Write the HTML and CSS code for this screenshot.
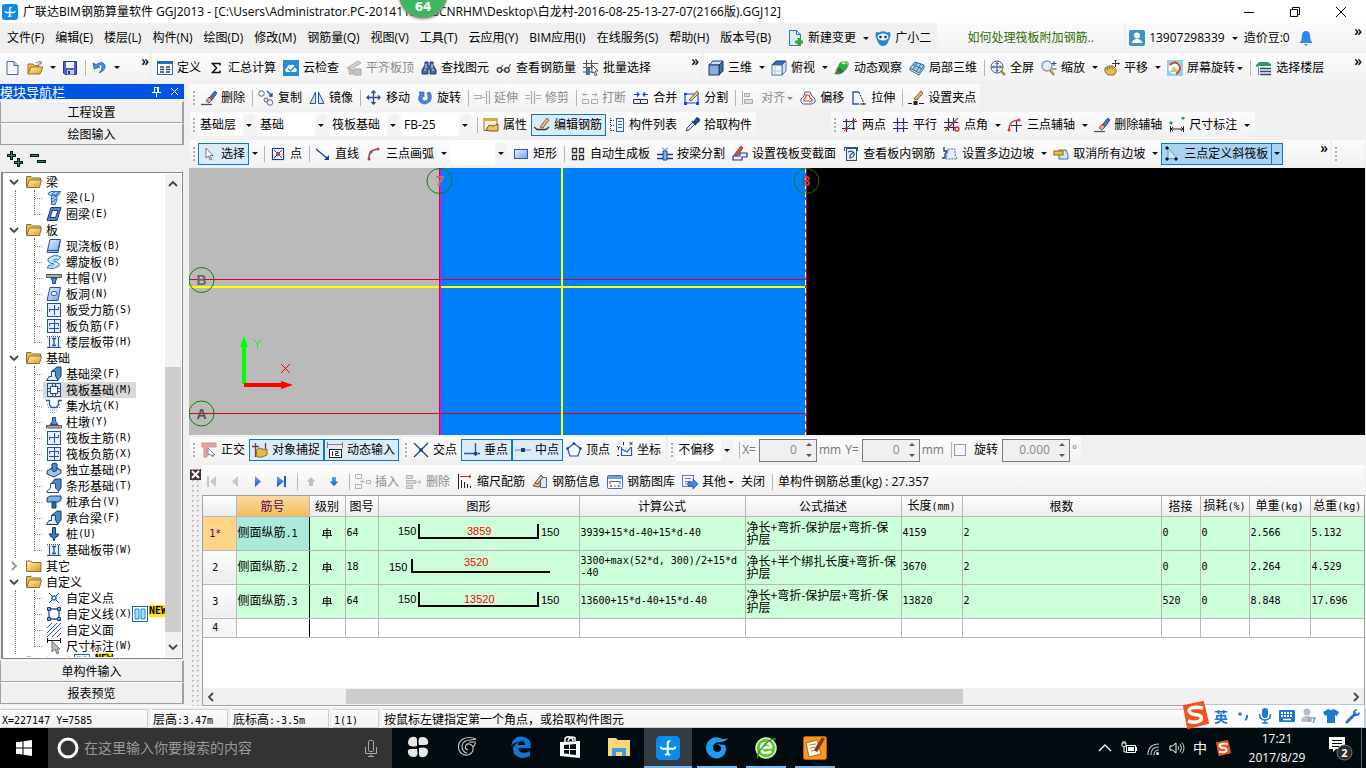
FILE: index.html
```html
<!DOCTYPE html>
<html lang="zh-CN">
<head>
<meta charset="utf-8">
<title>广联达BIM钢筋算量软件 GGJ2013</title>
<link rel="stylesheet" href="styles.css">
</head>
<body>
<svg class="sprite" aria-hidden="true">
<defs>
<linearGradient id="gb" x1="0" y1="0" x2="1" y2="1"><stop offset="0" stop-color="#eaf3ff"/><stop offset="1" stop-color="#6ea4ea"/></linearGradient>
<linearGradient id="gf" x1="0" y1="0" x2="1" y2="1"><stop offset="0" stop-color="#fff3b8"/><stop offset="1" stop-color="#d99c20"/></linearGradient>
<linearGradient id="gn" x1="0" y1="0" x2="0" y2="1"><stop offset="0" stop-color="#6fa8ff"/><stop offset="1" stop-color="#1550c8"/></linearGradient>
</defs>
<symbol id="app" viewBox="0 0 16 16"><rect width="16" height="16" rx="3" fill="#0b8bea"/><path d="M9.500 3.500Q7.800 3.200 7.800 5V11Q7.800 12.500 9.500 12.300M3.200 7Q3 8.700 5 8.500H11Q13 8.700 12.800 7M7.800 11Q7.500 12.800 6 12.300" fill="none" stroke="#fff" stroke-width="1.300"/></symbol>
<symbol id="new" viewBox="0 0 16 16"><path d="M3 1.500H10L14 5.500V14.500H3Z" fill="#f6faff" stroke="#4a6690"/><path d="M10 1.500V5.500H14" fill="#c4d8f0" stroke="#4a6690"/></symbol>
<symbol id="open" viewBox="0 0 16 16"><path d="M1 14V4H6L7.500 5.500H12V7" fill="#e8b84a" stroke="#9a7420"/><path d="M1 14L4 7H16L13 14Z" fill="url(#gf)" stroke="#9a7420"/><path d="M9 3Q12 0 14 3M14 1V4H11" fill="none" stroke="#5a7898"/></symbol>
<symbol id="save" viewBox="0 0 16 16"><path d="M1.500 1.500H14.500V14.500H3L1.500 13Z" fill="#4a62c8" stroke="#27348b"/><rect x="4" y="2" width="8" height="6" fill="#f5f7ff"/><rect x="5" y="10" width="7" height="4.500" fill="#c6cbe6"/><rect x="6" y="11" width="2" height="3" fill="#27348b"/></symbol>
<symbol id="undo" viewBox="0 0 16 16"><path d="M2 3L3 9L9 7L6.500 6Q11 3 11 7Q11 10 8 13Q15 10 14 5.500Q12 0 5 4.500Z" fill="#4d8ae8" stroke="#1f4fb0" stroke-width=".7"/></symbol>
<symbol id="form" viewBox="0 0 16 16"><rect x=".5" y="1.500" width="15" height="13" fill="#fff" stroke="#2b6cb8"/><rect y="1" width="16" height="3" fill="#2b6cb8"/><path d="M3 7H7M3 9.500H7M3 12H7M9 7H13M9 9.500H13M9 12H13" stroke="#3a3f60" stroke-width="1.300"/></symbol>
<symbol id="sigma" viewBox="0 0 16 16"><path d="M12 5.500V3.500H4.500L8.500 8L4.500 12.500H12V10.500" fill="none" stroke="#111" stroke-width="1.500"/></symbol>
<symbol id="cloud" viewBox="0 0 16 16"><rect width="16" height="16" fill="#1f8fd6"/><path d="M3 12Q1 9 4 8Q5 4 8 5Q12 4 12 8Q15 9 13 12Z" fill="#fff"/><path d="M5 8.500L7.500 11L12.500 5.500" fill="none" stroke="#1f8fd6" stroke-width="1.500"/></symbol>
<symbol id="flat" viewBox="0 0 16 16"><path d="M1 8L12 1L15 3L5 9Z" fill="#d4d4d4" stroke="#a8a8a8"/><path d="M2 10H7V14H3M8 9H15V15H8Z" fill="#c4c4c4" stroke="#a8a8a8"/></symbol>
<symbol id="bino" viewBox="0 0 16 16"><path d="M4 2H7V6H9V2H12V5L15 10V14H9V9H7V14H1V10L4 5Z" fill="#4b6a9d" stroke="#253a66"/><path d="M3 10H5M11 10H13M5 4V8M11 4V8" stroke="#d8e4f6"/></symbol>
<symbol id="glass" viewBox="0 0 16 16"><path d="M4 9L7 5M12 9L14.500 4" stroke="#444" fill="none"/><circle cx="3.500" cy="10" r="2.300" fill="#dfe8f0" stroke="#333" stroke-width="1.300"/><circle cx="11" cy="10" r="2.300" fill="#dfe8f0" stroke="#333" stroke-width="1.300"/><path d="M6 10H9" stroke="#333"/></symbol>
<symbol id="batch" viewBox="0 0 16 16"><path d="M3.500 0V15M0 3.500H15M0 7.500H9M0 12H9M8.500 0V9" stroke="#555" fill="none"/><rect x="4" y="8" width="3" height="7" fill="#4c79b8"/><path d="M9 5L15 11H12L14 15L12 15.500L11 12L9 13Z" fill="#fff" stroke="#333" stroke-width=".8"/></symbol>
<symbol id="cube" viewBox="0 0 16 16"><path d="M1 5L5 1H15L11 5Z" fill="#cfe2f4" stroke="#1d3a66"/><path d="M11 5L15 1V11L11 15Z" fill="#3d6fa3" stroke="#1d3a66"/><rect x="1" y="5" width="10" height="10" fill="#86b1dc" stroke="#1d3a66"/></symbol>
<symbol id="cubetop" viewBox="0 0 16 16"><path d="M1 5L5 1H15L11 5Z" fill="#2f6fc0" stroke="#1d3a66"/><path d="M11 5L15 1V11L11 15Z" fill="#cfe0f2" stroke="#4a78aa"/><rect x="1" y="5" width="10" height="10" fill="#eef5fd" stroke="#4a78aa"/><path d="M4 5V15M1 11H11" stroke="#a9c6e6"/></symbol>
<symbol id="orbit" viewBox="0 0 16 16"><ellipse cx="8" cy="8" rx="8" ry="3.500" transform="rotate(-45 8 8)" fill="none" stroke="#8c9a3a" stroke-width="1.200"/><circle cx="9" cy="6" r="4.500" fill="#2fae4a"/><path d="M3 14Q2 9 5 7L10 11Q8 14 3 14Z" fill="#1f7c34"/><path d="M8 3.500Q9.500 2.500 11 4" stroke="#eafbe8" stroke-width="1.500" fill="none"/><path d="M1 14L3 12" stroke="#c33" stroke-width="1.500"/></symbol>
<symbol id="part3d" viewBox="0 0 16 16"><path d="M1 8L6 2L15 5L10 13Z" fill="#a8cce8" stroke="#2c6a9e"/><path d="M4 4.500L13 9M8 3L4 10M12 4L7 12M1 8V10L10 15L15 8V5" fill="none" stroke="#2c6a9e"/></symbol>
<symbol id="full" viewBox="0 0 16 16"><path d="M11 11L15 15" stroke="#b58a3a" stroke-width="2.500"/><circle cx="7" cy="7" r="6" fill="#eaf2fc" stroke="#44536e"/><path d="M7 2.500V11.500M2.500 7H11.500M5.500 4L7 2.500L8.500 4M5.500 10L7 11.500L8.500 10M4 5.500L2.500 7L4 8.500M10 5.500L11.500 7L10 8.500" fill="none" stroke="#264a8e"/></symbol>
<symbol id="zoom" viewBox="0 0 16 16"><path d="M9 10L13 15" stroke="#b58a3a" stroke-width="2.500"/><circle cx="6" cy="6" r="5" fill="#e4edf6" stroke="#8894a4" stroke-width="1.300"/><path d="M13 1V6M11 3.500H15.500M11 9H15.500" stroke="#264a8e"/></symbol>
<symbol id="pan" viewBox="0 0 16 16"><path d="M1 8L3 7L5 6L7 6L9 6L12 9V12L10 15H4L1 12Z" fill="#e8ba60" stroke="#8a6a2a"/><path d="M4 10L3 7M6 9L5 6M8.500 9L7.500 6" stroke="#8a6a2a"/><path d="M11.500 0V7M8 3.500H15.500M10.500 1L11.500 0L12.500 1M14.500 2.500L15.500 3.500L14.500 4.500" stroke="#333" fill="none"/></symbol>
<symbol id="rotscr" viewBox="0 0 16 16"><rect width="16" height="16" fill="#8fd0ee"/><circle cx="7.500" cy="8" r="6" fill="#fff"/><path d="M3 12L7 6L12 12Z" fill="#b6d37a"/><path d="M3 5Q8 0 12 5Q15 10 9 14" fill="none" stroke="#d83a2a" stroke-width="1.800"/></symbol>
<symbol id="floor" viewBox="0 0 16 16"><path d="M0 5L3 2H12L15 4V6H3L0 7Z" fill="#2f9a58"/><path d="M4 8.500H15M4 11.500H15M4 14.500H15" stroke="#2e4a78" stroke-width="1.500"/><path d="M2.500 7V15" stroke="#5a88b8"/></symbol>
<symbol id="erase" viewBox="0 0 16 16"><path d="M0 14.500H11" stroke="#36508a" stroke-width="1.300"/><path d="M8 8L14 1L16 3L11 10Z" fill="#4c72b6" stroke="#22396e" stroke-width=".8"/><path d="M5 11L8 7L11 10L8 13Z" fill="#e6a28a" stroke="#7a3a2a" stroke-width=".8"/></symbol>
<symbol id="copy" viewBox="0 0 16 16"><circle cx="3.500" cy="3.500" r="2.800" fill="#f2f4f8" stroke="#667"/><circle cx="12" cy="12.500" r="2.800" fill="#f2f4f8" stroke="#667"/><circle cx="8" cy="10" r="2" fill="#dde" stroke="#667"/><path d="M9 1L14 6M14 3V6H11" fill="none" stroke="#24488c" stroke-width="1.300"/></symbol>
<symbol id="mirror" viewBox="0 0 16 16"><path d="M6.500 2V13.500H1Z" fill="#cfe2f6" stroke="#2c5a9a"/><path d="M9.500 2V13.500H15Z" fill="#cfe2f6" stroke="#2c5a9a"/></symbol>
<symbol id="move" viewBox="0 0 16 16"><path d="M7.500 1V14M1 7.500H14M5.500 3L7.500 1L9.500 3M5.500 12L7.500 14L9.500 12M3 5.500L1 7.500L3 9.500M12 5.500L14 7.500L12 9.500" fill="none" stroke="#2c4f80" stroke-width="1.300"/></symbol>
<symbol id="rotate" viewBox="0 0 16 16"><path d="M2 2H7V7L5.500 5.500Q4 11 8 11Q12 10.500 11 6L10 3L13 2Q16 8 12.500 12Q7 16 3 12Q0 9 3 4Z" fill="#4f87d8" stroke="#2453a4" stroke-width=".6"/></symbol>
<symbol id="extend" viewBox="0 0 16 16"><path d="M0 5.500H7V8.500H0M8 7.500H11M12.500 1V14M15.500 1V14" fill="none" stroke="#aaa" stroke-width="1.200"/></symbol>
<symbol id="trim" viewBox="0 0 16 16"><path d="M0 5.500H5M0 8.500H5M6.500 1V14M9.500 1V14M11 5.500H16M11 8.500H16" fill="none" stroke="#aaa" stroke-width="1.200"/></symbol>
<symbol id="break" viewBox="0 0 16 16"><path d="M.5 9.500H6.500V13.500H.5ZM9.500 9.500H15.500V13.500H9.500ZM1 4.500H6M10 4.500H15M3 2.500L1 4.500L3 6.500M13 2.500L15 4.500L13 6.500" fill="none" stroke="#aaa"/></symbol>
<symbol id="merge" viewBox="0 0 16 16"><path d="M1 4.500H6M10 4.500H15M4 2.500L6 4.500L4 6.500M12 2.500L10 4.500L12 6.500" fill="none" stroke="#1a48a8" stroke-width="1.200"/><path d="M.5 9.500H7.500V13.500H.5ZM7.500 9.500H14.500V13.500H7.500Z" fill="#e7eefa" stroke="#334"/></symbol>
<symbol id="split" viewBox="0 0 16 16"><path d="M1 4H14V13H1Z" fill="#eef4ff" stroke="#1f46d8" stroke-width="1.200"/><path d="M0 3H3V5H0ZM0 12H3V15H0ZM12 12H15V15H12Z" fill="#1f46d8"/><path d="M5 10L13 1L15 3L7 11Z" fill="#e9c27a" stroke="#553" stroke-width=".8"/></symbol>
<symbol id="align" viewBox="0 0 16 16"><path d="M1.500 1V15M3.500 3.500H8.500V6.500H3.500ZM3.500 9.500H11.500V13.500H3.500Z" fill="#ddd" stroke="#aaa"/></symbol>
<symbol id="offset" viewBox="0 0 16 16"><path d="M5 2H10L12 6L15 9V12L12 14H3L1 12V9L4 6Z" fill="#f4f7fc" stroke="#4a5a80"/><path d="M6 5H9L10 8L12 9V11H4V9L6 8Z" fill="#fff" stroke="#d23a3a" stroke-width="1.200"/></symbol>
<symbol id="stretch" viewBox="0 0 16 16"><path d="M8 14H2V2H8" fill="none" stroke="#2a5aa0" stroke-width="1.400"/><path d="M8 2L13 14H8" fill="none" stroke="#222" stroke-dasharray="2 1"/><path d="M11 14H15" stroke="#222"/></symbol>
<symbol id="grippt" viewBox="0 0 16 16"><path d="M0 13.500H4M11 13.500H16" stroke="#222"/><rect x="5.500" y="11" width="4" height="4" fill="#222"/><path d="M6 9L13 1L15 3L9 10Z" fill="#e8b26a" stroke="#664"/></symbol>
<symbol id="prop" viewBox="0 0 16 16"><rect x="1" y="1.500" width="13" height="12" fill="#f7f2de" stroke="#8a7440"/><rect x="1" y="1" width="13" height="3" fill="#d6a84a"/><path d="M3 13L6 8L10 9L15 7V14H7Z" fill="#efc16a" stroke="#7a5520"/></symbol>
<symbol id="editbar" viewBox="0 0 16 16"><path d="M0 10L3 12.500H12L15 10" fill="none" stroke="#333" stroke-width="1.300"/><path d="M6 10L13 1L15 3L9 11Z" fill="#e8b88a" stroke="#6a4a2a" stroke-width=".8"/></symbol>
<symbol id="list" viewBox="0 0 16 16"><path d="M1.500 1V15M2 3.500H5M2 8.500H5M2 13.500H5" stroke="#333" fill="none" stroke-dasharray="1 1"/><rect x="7.500" y="1.500" width="7" height="13" fill="#eef4fc" stroke="#36619b"/><path d="M9 4.500H13M9 7.500H13M9 10.500H13" stroke="#36619b"/></symbol>
<symbol id="pick" viewBox="0 0 16 16"><path d="M2 14L3 11L9 5L11 7L5 13Z" fill="#d6e8f8" stroke="#2a4a80"/><path d="M8 4L12 8M10 5L13 1Q16 2 15 4L11.500 7Z" fill="#28509c" stroke="#1f3c78" stroke-width="1.500"/></symbol>
<symbol id="twopt" viewBox="0 0 16 16"><path d="M4.500 2V15M11.500 1V13M1 4.500H15M0 11.500H13" stroke="#1f2e66" stroke-width="1.200"/><path d="M2 14L14 2" stroke="#1c8f2c"/><circle cx="4.500" cy="11.500" r="1.400" fill="#d22"/><circle cx="11.500" cy="4.500" r="1.400" fill="#d22"/></symbol>
<symbol id="parallel" viewBox="0 0 16 16"><path d="M4.500 1V15M10.500 1V15M0 5.500H15M0 11.500H15" stroke="#1f2e66" stroke-width="1.200"/><path d="M1 8.500H15" stroke="#d9a9b4"/></symbol>
<symbol id="ptangle" viewBox="0 0 16 16"><path d="M4.500 1V14M9.500 1V14M0 5.500H14M0 10.500H11" stroke="#1f2e66" stroke-width="1.200"/><path d="M1 14L14 1" stroke="#c33" stroke-width="1.300"/><circle cx="13" cy="12" r="2" fill="none" stroke="#d22" stroke-width="1.300"/></symbol>
<symbol id="threept" viewBox="0 0 16 16"><path d="M9.500 3V15M4 8.500H15" stroke="#1f2e66" stroke-width="1.200"/><path d="M2 13Q2 3 12 3" fill="none" stroke="#d33" stroke-width="1.300"/><circle cx="2" cy="13" r="1.500" fill="#d33"/><circle cx="12" cy="3" r="1.500" fill="#d33"/></symbol>
<symbol id="dim" viewBox="0 0 16 16"><path d="M1.500 9V15M14.500 9V15M2 12H14M4 10L2 12L4 14M12 10L14 12L12 14" fill="none" stroke="#222"/><path d="M1 5H3V7H1ZM13 0H15V2H13Z" fill="#2a9a3a" stroke="#2a9a3a"/></symbol>
<symbol id="cursor" viewBox="0 0 16 16"><path d="M5 2V12L7.500 10L9 14L10.500 13.500L9 9.500H12Z" fill="#fff" stroke="#667" stroke-width=".9"/></symbol>
<symbol id="point" viewBox="0 0 16 16"><rect x="2.500" y="2.500" width="11" height="11" fill="#fff" stroke="#1c3c8c" stroke-width="1.200"/><path d="M4 4L12 12M12 4L4 12" stroke="#1c3c8c"/><circle cx="8" cy="8" r="2" fill="#c33"/></symbol>
<symbol id="line" viewBox="0 0 16 16"><path d="M1 3L13 13" stroke="#1c3c8c" stroke-width="1.300"/><path d="M14 14V9L9 14Z" fill="#1c3c8c"/></symbol>
<symbol id="arc" viewBox="0 0 16 16"><path d="M3 13Q2 4 12 3" fill="none" stroke="#55607a" stroke-width="1.500"/><circle cx="3" cy="13" r="1.500" fill="#d33"/><circle cx="5" cy="6" r="1.500" fill="#d33"/><circle cx="12" cy="3" r="1.500" fill="#d33"/></symbol>
<symbol id="rect" viewBox="0 0 16 16"><rect x="1.500" y="3.500" width="13" height="9" fill="url(#gb)" stroke="#2d5ab8"/></symbol>
<symbol id="autoslab" viewBox="0 0 16 16"><path d="M2.500 2.500H6.500V6.500H2.500ZM9.500 2.500H13.500V6.500H9.500ZM2.500 9.500H6.500V13.500H2.500ZM9.500 9.500H13.500V13.500H9.500Z" fill="#fff" stroke="#333" stroke-width="1.300"/></symbol>
<symbol id="beamsplit" viewBox="0 0 16 16"><path d="M0 8.500H6M10 8.500H16M0 12.500H16" stroke="#1c3c8c" stroke-width="1.300"/><path d="M6 5H10V14H6Z" fill="#7bb3e8" stroke="#1c3c8c"/><path d="M5 2L8 4L11 2" fill="none" stroke="#2a8ae0"/></symbol>
<symbol id="varsec" viewBox="0 0 16 16"><path d="M1 14V10H8V7H15V11H10V14Z" fill="#eef" stroke="#1c3c8c" stroke-width="1.200"/><path d="M2 9L9 0L11 2L5 10Z" fill="#e0503a" stroke="#8a2a1a" stroke-width=".8"/></symbol>
<symbol id="viewbar" viewBox="0 0 16 16"><rect x="3.500" y="2.500" width="10" height="12" fill="#e6f0fa" stroke="#2c4f80"/><path d="M1 1.500H15M1.500 1V5M14.500 1V5" fill="none" stroke="#2c4f80"/><path d="M5 6Q9 4 11 7Q12 11 7 12Q6 9 11 6" fill="none" stroke="#2c4f80" stroke-width="1.200"/></symbol>
<symbol id="slope" viewBox="0 0 16 16"><path d="M2 1V5H6L3 8V12H0" fill="none" stroke="#1c3c8c" stroke-width="1.300"/><path d="M6 3H13V8L15 13H4Z" fill="#e6eefa" stroke="#4a6ab0" stroke-dasharray="2 1"/></symbol>
<symbol id="noslope" viewBox="0 0 16 16"><path d="M6 4H13L15 9V13H6Z" fill="#d6e4f4" stroke="#4a6ab0"/><rect x="1" y="5" width="9" height="4" fill="#f3c02c" stroke="#8a6a1a"/></symbol>
<symbol id="raft3" viewBox="0 0 16 16"><path d="M4 2L13 12L4 13Z" fill="#d4e6fa" stroke="#5a94d4"/><path d="M2 1H4V3H2ZM2 12H4V14H2ZM11 12H13V14H11Z" fill="#111" stroke="#111"/></symbol>
<symbol id="ortho" viewBox="0 0 16 16"><path d="M1 1H15V5H6V15H3V5H1Z" fill="#e0a4a4" stroke="#cf8f8f"/><path d="M7 6L14 13H11L12 15L9 12L7 13Z" fill="#fff" stroke="#667" stroke-width=".8"/></symbol>
<symbol id="snap" viewBox="0 0 16 16"><path d="M3.500 1V15M0 4.500H7M13.500 1V7" stroke="#7a3a3a" stroke-width="1.300"/><path d="M4 8L8 6L13 8L15 7V13L10 15H5Z" fill="#e8b850" stroke="#8a6a2a"/></symbol>
<symbol id="dyn" viewBox="0 0 16 16"><path d="M.5 0V6M15.500 0V6M1 2.500H15" stroke="#b46a6a" fill="none"/><rect x="2.500" y="7.500" width="12" height="8" fill="#fff" stroke="#222"/><path d="M5.500 9V14M8 9.500H11V11.500H8.500V13.500H12" fill="none" stroke="#222"/></symbol>
<symbol id="cross" viewBox="0 0 16 16"><path d="M1 1L15 15M15 1L1 15" stroke="#1c3c8c" stroke-width="1.200"/><circle cx="8" cy="8" r="1.800" fill="#1c3c8c"/></symbol>
<symbol id="perp" viewBox="0 0 16 16"><path d="M11.500 1V14M0 11.500H16" stroke="#2a58a8" stroke-width="1.400"/><circle cx="11.500" cy="11.500" r="1.800" fill="#1c3c8c"/></symbol>
<symbol id="mid" viewBox="0 0 16 16"><path d="M0 8H16" stroke="#7e9cd0" stroke-width="1.400"/><rect x="6" y="6" width="4" height="4" fill="#1c3c8c"/></symbol>
<symbol id="vertex" viewBox="0 0 16 16"><path d="M8 1.500L14.500 6.500L12 14H4L1.500 6.500Z" fill="#f4f9ff" stroke="#1f55b0" stroke-width="1.200"/><circle cx="8" cy="1.500" r="1.300" fill="#1c3c8c"/><circle cx="14.500" cy="6.500" r="1.300" fill="#1c3c8c"/><circle cx="1.500" cy="6.500" r="1.300" fill="#1c3c8c"/></symbol>
<symbol id="coord" viewBox="0 0 16 16"><path d="M4.500 5V13.500H15M4.500 7L10 10L14 5M14.500 5V13" fill="none" stroke="#2a58a8" stroke-width="1.200"/><path d="M0 4L1.500 6L3 4M1.500 6V8M12.500 0L15.500 3M15.500 0L12.500 3M0 13.500H2M6.500 0V3" stroke="#222" fill="none"/></symbol>
<symbol id="first" viewBox="0 0 16 16"><path d="M3 2V13" stroke="#c8c8c8" stroke-width="2"/><path d="M11 2V13L5 7.500Z" fill="#c8c8c8"/></symbol>
<symbol id="prev" viewBox="0 0 16 16"><path d="M10 2V13L4 7.500Z" fill="#c8c8c8"/></symbol>
<symbol id="next" viewBox="0 0 16 16"><path d="M4 2L10 7.500L4 13Z" fill="url(#gn)"/></symbol>
<symbol id="last" viewBox="0 0 16 16"><path d="M11 2V13" stroke="#1c5ad0" stroke-width="2"/><path d="M3 2L10 7.500L3 13Z" fill="url(#gn)"/></symbol>
<symbol id="up" viewBox="0 0 16 16"><path d="M8 3L12.500 7.500H10V12H6V7.500H3.500Z" fill="#c0c0c0"/></symbol>
<symbol id="down" viewBox="0 0 16 16"><path d="M8 12L12.500 7.500H10V3H6V7.500H3.500Z" fill="url(#gn)"/></symbol>
<symbol id="insert" viewBox="0 0 16 16"><path d="M.5 .5H6.500V4.500H.5ZM.5 10.500H6.500V14.500H.5ZM11.500 6.500H15.500V9.500H11.500ZM10 7.500H6M8 5.500L6 7.500L8 9.500" fill="none" stroke="#b4b4b4"/></symbol>
<symbol id="remove" viewBox="0 0 16 16"><path d="M.5 1.500H6.500V4.500H.5ZM.5 11.500H6.500V14.500H.5ZM.5 6.500H9.500V9.500H.5Z" fill="#ddd" stroke="#b4b4b4"/><path d="M10 8H15M13 6L15 8L13 10" fill="none" stroke="#b4b4b4"/></symbol>
<symbol id="scale" viewBox="0 0 16 16"><path d="M3 2.500H14M12 1L14 2.500L12 4" stroke="#a33" fill="none"/><path d="M1.500 0V15M4.500 6V14M7.500 8V14M10.500 10V14M13.500 12V14" stroke="#223"/></symbol>
<symbol id="info" viewBox="0 0 16 16"><path d="M8.500 3.500H14.500V13.500H8.500Z" fill="#dfe9f6" stroke="#4a6aa0"/><path d="M1 12L5 7L9 9L7 13Z" fill="#f0c478" stroke="#7a5520"/><path d="M3 9L9 1L11 3L6 10Z" fill="#e3cda8" stroke="#554"/></symbol>
<symbol id="gallery" viewBox="0 0 16 16"><rect x=".5" y="1.500" width="15" height="13" rx="1" fill="#f2f8ff" stroke="#3a6fb8"/><rect x="1" y="2" width="14" height="3" fill="#6f9fdc"/><path d="M3 7.500H13M3 7V10M13 7V10" fill="none" stroke="#666"/><path d="M3 12H5" stroke="#d33" stroke-width="1.500"/><path d="M7 12H9" stroke="#e8b020" stroke-width="1.500"/><path d="M11 12H13" stroke="#3a9a3a" stroke-width="1.500"/></symbol>
<symbol id="other" viewBox="0 0 16 16"><rect x=".5" y="1.500" width="11" height="11" fill="#f6f9fd" stroke="#6a7fa0"/><path d="M3 4.500H9M3 7.500H9M3 10H6" stroke="#6a7fa0"/><path d="M6 8H11V5L16 10L11 15V12H6Z" fill="#4f87e0" stroke="#1f4fa8" stroke-width=".7"/></symbol>
<symbol id="newchg" viewBox="0 0 16 16"><path d="M1.500 .5H8.500L12.500 4.500V15.500H1.500Z" fill="#d9eefb" stroke="#2a7ab8"/><path d="M8.500 .5V4.500H12.500" fill="none" stroke="#2a7ab8"/><path d="M11 8V16M7 12H15" stroke="#3aa828" stroke-width="3"/></symbol>
<symbol id="owl" viewBox="0 0 16 16"><path d="M1 2L4 2.500Q8 0 12 2.500L15 2L15.500 6L14 10Q12 16 8 16Q4 16 2 10L.5 6Z" fill="#2387d6"/><ellipse cx="8" cy="7" rx="5.500" ry="3.500" fill="#e8f5ff"/><circle cx="5.500" cy="7" r="1.300" fill="#134"/><circle cx="10.500" cy="7" r="1.300" fill="#134"/></symbol>
<symbol id="user" viewBox="0 0 16 16"><rect width="16" height="16" rx="2" fill="#3a94c4"/><circle cx="8" cy="5.500" r="3" fill="#fff"/><path d="M2.500 13Q4 9 8 9Q12 9 13.500 13Z" fill="#fff"/></symbol>
<symbol id="bell" viewBox="0 0 16 16"><path d="M2 12Q4 10 4 6Q4 1 8 1Q12 1 12 6Q12 10 14 12V13H2Z" fill="#2a8af0"/><path d="M6 14H10L8 16Z" fill="#2a8af0"/></symbol>
<symbol id="plus2" viewBox="0 0 16 16"><path d="M4.500 0V9M0 4.500H9M11.500 7V16M7 11.500H16" stroke="#111" stroke-width="3"/><path d="M4.500 1V8M1 4.500H8M11.500 8V15M8 11.500H15" stroke="#189080"/></symbol>
<symbol id="minus2" viewBox="0 0 16 16"><path d="M0 4.500H9M7 10.500H16" stroke="#111" stroke-width="3"/><path d="M1 4.500H8M8 10.500H15" stroke="#189080"/></symbol>
<symbol id="chev" viewBox="0 0 10 10"><path d="M1 3L5 7L9 3" fill="none" stroke="#444" stroke-width="1.800"/></symbol>
<symbol id="chevr" viewBox="0 0 10 10"><path d="M3 1L7 5L3 9" fill="none" stroke="#999" stroke-width="1.800"/></symbol>
<symbol id="folder" viewBox="0 0 16 16"><path d="M.5 13.500V2.500H5L6.500 4H14.500V6" fill="#e9bf55" stroke="#8c6d28"/><path d="M.5 13.500L3.500 6H15.500L13.500 13.500Z" fill="url(#gf)" stroke="#8c6d28"/></symbol>
<symbol id="folderc" viewBox="0 0 16 16"><path d="M.5 13.500V3H5L6.500 4.500H15V13.500Z" fill="url(#gf)" stroke="#8c6d28"/></symbol>
<symbol id="beam" viewBox="0 0 16 16"><path d="M2 3.500L5 1.500H14.500L13 5H3Z" fill="#bcd8f6" stroke="#1f6ac0"/><path d="M5.500 5.500H11V10L9 14.500H5.500Z" fill="url(#gb)" stroke="#1f6ac0"/><path d="M6 9L10 6M6 12L10 9M6 4L9 2M10 4L13 2" stroke="#1f6ac0"/></symbol>
<symbol id="ring" viewBox="0 0 16 16"><path d="M5 1.500H15L11 14.500H1Z" fill="#5b82cc" stroke="#143a80"/><path d="M6.500 4.500H12L9.500 11.500H4Z" fill="#fff" stroke="#143a80"/></symbol>
<symbol id="slab" viewBox="0 0 16 16"><path d="M4 1.500H14.500L12 14.500H1Z" fill="url(#gb)" stroke="#2350a0"/><path d="M1 12.500H12L14 3" fill="none" stroke="#2350a0"/></symbol>
<symbol id="spiral" viewBox="0 0 16 16"><path d="M2 5Q8 -1 15 3L12 6Q7 5 8 7Q15 9 13 12Q8 16 1 14L3 11Q7 12 8 10Q1 9 2 5Z" fill="#bfe0fa" stroke="#2a7cc8"/></symbol>
<symbol id="cap" viewBox="0 0 16 16"><path d="M.5 4.500H15.500V7.500H.5Z" fill="#aaa" stroke="#555"/><path d="M5 8.500H11L9.500 11V13.500H6.500V11Z" fill="#4f8ae0" stroke="#1f4fa0"/></symbol>
<symbol id="hole" viewBox="0 0 16 16"><path d="M4 1.500H14.500L12 14.500H1Z" fill="url(#gb)" stroke="#2350a0"/><ellipse cx="8" cy="7.500" rx="3" ry="2" fill="#fff" stroke="#2350a0"/></symbol>
<symbol id="bars" viewBox="0 0 16 16"><rect x="1.500" y="1.500" width="13" height="13" fill="#e4eefc" stroke="#2350a0"/><path d="M8.500 3V13M3 7.500H13M3.500 7V10M12.500 5V8" stroke="#2350a0" fill="none"/></symbol>
<symbol id="negbar" viewBox="0 0 16 16"><rect x="1.500" y="1.500" width="13" height="13" fill="#e4eefc" stroke="#2350a0"/><path d="M8.500 2V14M3 5.500H13M3 10.500H13M3.500 5V8M12.500 5V8" stroke="#2350a0" fill="none"/></symbol>
<symbol id="band" viewBox="0 0 16 16"><rect x="1" y="3" width="14" height="10" fill="#e4eefc"/><path d="M1 2.500H15" stroke="#2350a0" stroke-dasharray="1 1"/><path d="M1 13.500H15M3.500 3V13M12.500 3V13" stroke="#2350a0"/><path d="M8 4V12M6 4.500H10M6 11.500H10" stroke="#2350a0" stroke-width="1.300"/></symbol>
<symbol id="fbeam" viewBox="0 0 16 16"><path d="M6 5L11 1H15V10L11 15Z" fill="#4f8ac4" stroke="#123c70"/><path d="M5.500 5.500H9.500V10L12 14.500H.5L3 10.500H5.500Z" fill="#dcebfa" stroke="#123c70"/></symbol>
<symbol id="raft" viewBox="0 0 16 16"><rect x="1.500" y="1.500" width="13" height="13" fill="#dbe8f8" stroke="#1f4f90"/><path d="M4.500 4.500H11.500V11.500H4.500Z" fill="#fff" stroke="#1f4f90"/><path d="M6.500 1V4M9.500 1V4M6.500 12V15M9.500 12V15M1 6.500H4M1 9.500H4M12 6.500H15M12 9.500H15" fill="none" stroke="#1f4f90"/></symbol>
<symbol id="pit" viewBox="0 0 16 16"><path d="M0 2.500H3.500V7L6 9.500H10L12.500 7V2.500H16" fill="none" stroke="#1f5aa8" stroke-width="1.300"/><path d="M1 6.500H3M2 9.500H5M4 12H12M13 6.500H15M11 9.500H14M6 14.500H10" stroke="#4f8ae0" stroke-dasharray="1 1"/></symbol>
<symbol id="pier" viewBox="0 0 16 16"><path d="M.5 11.500H15.500V14H.5Z" fill="#aaa" stroke="#555"/><path d="M6.500 3.500H9.500V7L12 10.500H4L6.500 7Z" fill="#4f8ae0" stroke="#1f4fa0"/></symbol>
<symbol id="isof" viewBox="0 0 16 16"><path d="M1 9L8 5L15 8V11L8 15L1 12Z" fill="#9cc4ea" stroke="#123c70"/><path d="M6 2L9 1L11 2V8L8 10L6 8Z" fill="#4a88c8" stroke="#123c70"/></symbol>
<symbol id="stripf" viewBox="0 0 16 16"><path d="M5 6L9 1H15V10L12 14" fill="#4a88c8" stroke="#123c70"/><path d="M4.500 5.500H9.500V10L12.500 13V14.500H1V13L4.500 10Z" fill="#fff" stroke="#1f4fa0"/></symbol>
<symbol id="pilecap" viewBox="0 0 16 16"><path d="M1 4L4 2H15V6L12 8H1Z" fill="#7db0e4" stroke="#123c70"/><path d="M6 8H10V14H6Z" fill="#2d68b0" stroke="#123c70"/></symbol>
<symbol id="pile" viewBox="0 0 16 16"><path d="M6.500 1.500H9.500V8H13L11 11H9.500L8 15L6.500 11H5L3 8H6.500Z" fill="#3f7cc4" stroke="#123c70"/></symbol>
<symbol id="cpoint" viewBox="0 0 16 16"><path d="M3 3L13 13M13 3L3 13" stroke="#1c4c9c"/><circle cx="8" cy="8" r="2" fill="#fff" stroke="#1c6ad0" stroke-width="1.500"/></symbol>
<symbol id="cline" viewBox="0 0 16 16"><path d="M3 3H13V13H3Z" fill="#fff" stroke="#2350c0" stroke-width="1.300"/><path d="M1.500 1.500H4.500V4.500H1.500ZM11.500 1.500H14.500V4.500H11.500ZM1.500 11.500H4.500V14.500H1.500ZM11.500 11.500H14.500V14.500H11.500Z" fill="#7fa4e8" stroke="#123c90"/></symbol>
<symbol id="cface" viewBox="0 0 16 16"><path d="M1 6L6 1M1 11L11 1M1 15L15 1M6 15L15 6M11 15L15 11" stroke="#1c5ad0"/></symbol>
<symbol id="cdim" viewBox="0 0 16 16"><path d="M1.500 0V5M14.500 0V5M1 2.500H14" stroke="#111"/><path d="M6 3V14L9 11L11 16L13 15L11 11H14Z" fill="#bbb" stroke="#777"/></symbol>
<symbol id="pages" viewBox="0 0 16 16"><rect x=".5" y=".5" width="15" height="15" fill="#fff" stroke="#1c6ac0"/><path d="M3 3H7V13H3ZM9 3H13V13H9Z" fill="#a7dcf8" stroke="#1c8ad8"/></symbol>
<symbol id="sogou" viewBox="0 0 28 28"><path d="M3 5L22 1L27 22L7 27Z" fill="#f4511e" stroke="#f4511e" stroke-width="2" stroke-linejoin="round"/><path d="M22 7Q11 5 8 9Q8 13 14 13.500Q22 14 20 19Q16 23 7 20" fill="none" stroke="#fff" stroke-width="3.500"/></symbol>
<symbol id="win" viewBox="0 0 16 16"><path d="M0 2.300L6.500 1.400V7.500H0ZM7.500 1.200L16 0V7.500H7.500ZM0 8.500H6.500V14.600L0 13.700ZM7.500 8.500H16V16L7.500 14.800Z" fill="#fff"/></symbol>
<symbol id="grade" viewBox="0 0 12 12"><path d="M2.500 9V3.500H9.500V9M1 8.500H11M6 1V11.500M3 6H9" stroke="#111" fill="none"/></symbol>
</svg>

<div class="desktop">
<div class="app">
  <header class="title">
    <svg class="i"><use href="#app"/></svg>
    <h1>广联达BIM钢筋算量软件 GGJ2013 - [C:\Users\Administrator.PC-20141127ABCNRHM\Desktop\白龙村-2016-08-25-13-27-07(2166版).GGJ12]</h1>
    <div class="winbtns">
      <button aria-label="最小化"><svg width="12" height="12"><path d="M1 6.500H11" stroke="#000"/></svg></button>
      <button aria-label="还原"><svg width="12" height="12"><path d="M1.500 3.500H8.500V10.500H1.500ZM3.500 3V1.500H10.500V8.500H9" fill="none" stroke="#000"/></svg></button>
      <button aria-label="关闭"><svg width="12" height="12"><path d="M1 1L11 11M11 1L1 11" stroke="#000"/></svg></button>
    </div>
    <div class="badge">64</div>
  </header>

  <nav class="menu">
    <div class="menus">
      <button>文件(F)</button><button>编辑(E)</button><button>楼层(L)</button><button>构件(N)</button><button>绘图(D)</button><button>修改(M)</button><button>钢筋量(Q)</button><button>视图(V)</button><button>工具(T)</button><button>云应用(Y)</button><button>BIM应用(I)</button><button>在线服务(S)</button><button>帮助(H)</button><button>版本号(B)</button>
    </div>
    <button class="tb"><svg class="i"><use href="#newchg"/></svg>新建变更</button><i class="dd"></i>
    <button class="tb"><svg class="i"><use href="#owl"/></svg>广小二</button>
    <div class="strip tip"><a href="#">如何处理筏板附加钢筋..</a></div>
    <div class="strip account">
      <button class="tb"><svg class="i"><use href="#user"/></svg>13907298339</button><i class="dd"></i>
      <span class="beans">造价豆:0</span>
      <button class="tb" aria-label="通知"><svg class="i"><use href="#bell"/></svg></button>
      <button class="more">»</button>
    </div>
  </nav>

  <div class="row main-tools">
    <div class="strip files">
      <button class="tb" aria-label="新建"><svg class="i"><use href="#new"/></svg></button>
      <button class="tb" aria-label="打开"><svg class="i"><use href="#open"/></svg></button><i class="dd"></i>
      <button class="tb" aria-label="保存"><svg class="i"><use href="#save"/></svg></button><i class="sep"></i>
      <button class="tb" aria-label="撤销"><svg class="i"><use href="#undo"/></svg></button><i class="dd"></i>
      <button class="more">»</button>
    </div>
    <div class="strip define">
      <button class="tb"><svg class="i"><use href="#form"/></svg>定义</button>
      <button class="tb"><svg class="i"><use href="#sigma"/></svg>汇总计算</button>
      <button class="tb"><svg class="i"><use href="#cloud"/></svg>云检查</button>
      <button class="tb" disabled><svg class="i"><use href="#flat"/></svg>平齐板顶</button>
      <button class="tb"><svg class="i"><use href="#bino"/></svg>查找图元</button>
      <button class="tb"><svg class="i"><use href="#glass"/></svg>查看钢筋量</button>
      <button class="tb"><svg class="i"><use href="#batch"/></svg>批量选择</button>
      <button class="more">»</button>
    </div>
    <div class="strip view">
      <button class="tb"><svg class="i"><use href="#cube"/></svg>三维</button><i class="dd"></i>
      <button class="tb"><svg class="i"><use href="#cubetop"/></svg>俯视</button><i class="dd"></i>
      <button class="tb"><svg class="i"><use href="#orbit"/></svg>动态观察</button>
      <button class="tb"><svg class="i"><use href="#part3d"/></svg>局部三维</button><i class="sep"></i>
      <button class="tb"><svg class="i"><use href="#full"/></svg>全屏</button>
      <button class="tb"><svg class="i"><use href="#zoom"/></svg>缩放</button><i class="dd"></i>
      <button class="tb"><svg class="i"><use href="#pan"/></svg>平移</button><i class="dd"></i>
      <button class="tb"><svg class="i"><use href="#rotscr"/></svg><span>屏幕旋转<i class="dn"></i></span></button><i class="sep"></i>
      <button class="tb"><svg class="i"><use href="#floor"/></svg>选择楼层</button>
      <button class="more">»</button>
    </div>
  </div>

  <div class="body">
    <aside class="side">
      <div class="side-head"><span>模块导航栏</span>
        <button aria-label="固定"><svg width="9" height="10"><path d="M2.500 0V5M6.500 0V5M2 .5H7M0 5.500H9M4.500 6V10M5.500 0V5" stroke="#fff" fill="none"/></svg></button>
        <button aria-label="关闭"><svg width="9" height="9"><path d="M1 1L8 8M8 1L1 8" stroke="#fff"/></svg></button>
      </div>
      <button class="tab">工程设置</button>
      <button class="tab">绘图输入</button>
      <div class="treebar"><button aria-label="全部展开"><svg class="i"><use href="#plus2"/></svg></button><button aria-label="全部折叠"><svg class="i"><use href="#minus2"/></svg></button></div>
      <div class="tree">
        <ul class="roots">
          <li><div class="g"><svg class="c"><use href="#chev"/></svg><svg class="i"><use href="#folder"/></svg>梁</div>
            <ul class="kids">
              <li><i></i><button><svg class="i"><use href="#beam"/></svg>梁<kbd>(L)</kbd></button></li>
              <li><i></i><button><svg class="i"><use href="#ring"/></svg>圈梁<kbd>(E)</kbd></button></li>
            </ul></li>
          <li><div class="g"><svg class="c"><use href="#chev"/></svg><svg class="i"><use href="#folder"/></svg>板</div>
            <ul class="kids">
              <li><i></i><button><svg class="i"><use href="#slab"/></svg>现浇板<kbd>(B)</kbd></button></li>
              <li><i></i><button><svg class="i"><use href="#spiral"/></svg>螺旋板<kbd>(B)</kbd></button></li>
              <li><i></i><button><svg class="i"><use href="#cap"/></svg>柱帽<kbd>(V)</kbd></button></li>
              <li><i></i><button><svg class="i"><use href="#hole"/></svg>板洞<kbd>(N)</kbd></button></li>
              <li><i></i><button><svg class="i"><use href="#bars"/></svg>板受力筋<kbd>(S)</kbd></button></li>
              <li><i></i><button><svg class="i"><use href="#negbar"/></svg>板负筋<kbd>(F)</kbd></button></li>
              <li><i></i><button><svg class="i"><use href="#band"/></svg>楼层板带<kbd>(H)</kbd></button></li>
            </ul></li>
          <li><div class="g"><svg class="c"><use href="#chev"/></svg><svg class="i"><use href="#folder"/></svg>基础</div>
            <ul class="kids">
              <li><i></i><button><svg class="i"><use href="#fbeam"/></svg>基础梁<kbd>(F)</kbd></button></li>
              <li><i></i><button class="sel"><svg class="i"><use href="#raft"/></svg>筏板基础<kbd>(M)</kbd></button></li>
              <li><i></i><button><svg class="i"><use href="#pit"/></svg>集水坑<kbd>(K)</kbd></button></li>
              <li><i></i><button><svg class="i"><use href="#pier"/></svg>柱墩<kbd>(Y)</kbd></button></li>
              <li><i></i><button><svg class="i"><use href="#bars"/></svg>筏板主筋<kbd>(R)</kbd></button></li>
              <li><i></i><button><svg class="i"><use href="#negbar"/></svg>筏板负筋<kbd>(X)</kbd></button></li>
              <li><i></i><button><svg class="i"><use href="#isof"/></svg>独立基础<kbd>(P)</kbd></button></li>
              <li><i></i><button><svg class="i"><use href="#stripf"/></svg>条形基础<kbd>(T)</kbd></button></li>
              <li><i></i><button><svg class="i"><use href="#pilecap"/></svg>桩承台<kbd>(V)</kbd></button></li>
              <li><i></i><button><svg class="i"><use href="#fbeam"/></svg>承台梁<kbd>(F)</kbd></button></li>
              <li><i></i><button><svg class="i"><use href="#pile"/></svg>桩<kbd>(U)</kbd></button></li>
              <li><i></i><button><svg class="i"><use href="#band"/></svg>基础板带<kbd>(W)</kbd></button></li>
            </ul></li>
          <li><div class="g"><svg class="c"><use href="#chevr"/></svg><svg class="i"><use href="#folderc"/></svg>其它</div></li>
          <li><div class="g"><svg class="c"><use href="#chev"/></svg><svg class="i"><use href="#folder"/></svg>自定义</div>
            <ul class="kids">
              <li><i></i><button><svg class="i"><use href="#cpoint"/></svg>自定义点</button></li>
              <li><i></i><button><svg class="i"><use href="#cline"/></svg>自定义线<kbd>(X)</kbd><svg class="i pg"><use href="#pages"/></svg><em>NEW</em></button></li>
              <li><i></i><button><svg class="i"><use href="#cface"/></svg>自定义面</button></li>
              <li><i></i><button><svg class="i"><use href="#cdim"/></svg>尺寸标注<kbd>(W)</kbd></button></li>
            </ul></li>
          <li><div class="g"><svg class="c"><use href="#chevr"/></svg><svg class="i"><use href="#folderc"/></svg>识别<svg class="i pg"><use href="#pages"/></svg><em>NEW</em></div></li>
        </ul>
        <div class="vbar"><svg class="c"><path d="M1 7L5 3L9 7" fill="none" stroke="#444" stroke-width="1.800"/></svg><div class="thumb"></div><svg class="c"><use href="#chev"/></svg></div>
      </div>
      <button class="tab">单构件输入</button>
      <button class="tab">报表预览</button>
    </aside>

    <main class="work">
      <div class="row r2"><div class="strip">
        <i class="grip"></i>
        <button class="tb"><svg class="i"><use href="#erase"/></svg>删除</button><i class="sep"></i>
        <button class="tb"><svg class="i"><use href="#copy"/></svg>复制</button>
        <button class="tb"><svg class="i"><use href="#mirror"/></svg>镜像</button><i class="sep"></i>
        <button class="tb"><svg class="i"><use href="#move"/></svg>移动</button>
        <button class="tb"><svg class="i"><use href="#rotate"/></svg>旋转</button><i class="sep"></i>
        <button class="tb" disabled><svg class="i"><use href="#extend"/></svg>延伸</button>
        <button class="tb" disabled><svg class="i"><use href="#trim"/></svg>修剪</button><i class="sep"></i>
        <button class="tb" disabled><svg class="i"><use href="#break"/></svg>打断</button>
        <button class="tb"><svg class="i"><use href="#merge"/></svg>合并</button>
        <button class="tb"><svg class="i"><use href="#split"/></svg>分割</button><i class="sep"></i>
        <button class="tb" disabled><svg class="i"><use href="#align"/></svg><span>对齐<i class="dn"></i></span></button>
        <button class="tb"><svg class="i"><use href="#offset"/></svg>偏移</button>
        <button class="tb"><svg class="i"><use href="#stretch"/></svg>拉伸</button><i class="sep"></i>
        <button class="tb"><svg class="i"><use href="#grippt"/></svg>设置夹点</button>
      </div></div>

      <div class="row r3">
        <div class="strip">
          <i class="grip"></i>
          <span class="combo short"><select aria-label="楼层"><option>基础层</option></select></span>
          <span class="combo"><select aria-label="构件类别"><option>基础</option></select></span>
          <span class="combo"><select aria-label="构件类型"><option>筏板基础</option></select></span>
          <span class="combo"><select aria-label="构件"><option>FB-25</option></select></span><i class="sep"></i>
          <button class="tb"><svg class="i"><use href="#prop"/></svg>属性</button>
          <button class="tb on"><svg class="i"><use href="#editbar"/></svg>编辑钢筋</button>
          <button class="tb"><svg class="i"><use href="#list"/></svg>构件列表</button>
          <button class="tb"><svg class="i"><use href="#pick"/></svg>拾取构件</button>
        </div>
        <div class="strip axis">
          <i class="grip"></i>
          <button class="tb"><svg class="i"><use href="#twopt"/></svg>两点</button>
          <button class="tb"><svg class="i"><use href="#parallel"/></svg>平行</button>
          <button class="tb"><svg class="i"><use href="#ptangle"/></svg>点角</button><i class="dd"></i>
          <button class="tb"><svg class="i"><use href="#threept"/></svg>三点辅轴</button><i class="dd"></i>
          <button class="tb"><svg class="i"><use href="#erase"/></svg>删除辅轴</button>
          <button class="tb"><svg class="i"><use href="#dim"/></svg>尺寸标注</button><i class="dd"></i>
        </div>
      </div>

      <div class="row r4">
        <div class="strip draw">
          <i class="grip"></i>
          <button class="tb on"><svg class="i"><use href="#cursor"/></svg>选择</button><i class="dd"></i><i class="sep"></i>
          <button class="tb"><svg class="i"><use href="#point"/></svg>点</button><i class="sep"></i>
          <button class="tb"><svg class="i"><use href="#line"/></svg>直线</button>
          <button class="tb"><svg class="i"><use href="#arc"/></svg>三点画弧</button><i class="dd"></i>
          <span class="combo short"><select aria-label="画法"><option></option></select></span>
          <button class="tb"><svg class="i"><use href="#rect"/></svg>矩形</button><i class="sep"></i>
          <button class="tb"><svg class="i"><use href="#autoslab"/></svg>自动生成板</button>
          <button class="tb"><svg class="i"><use href="#beamsplit"/></svg>按梁分割</button>
          <button class="tb"><svg class="i"><use href="#varsec"/></svg>设置筏板变截面</button>
          <button class="tb"><svg class="i"><use href="#viewbar"/></svg>查看板内钢筋</button>
          <button class="tb"><svg class="i"><use href="#slope"/></svg>设置多边边坡</button><i class="dd"></i>
          <button class="tb"><svg class="i"><use href="#noslope"/></svg>取消所有边坡</button><i class="dd"></i>
          <button class="tb on hot"><svg class="i"><use href="#raft3"/></svg>三点定义斜筏板</button><button class="hotdd" aria-label="更多斜板方式"><i class="dd"></i></button>
          <button class="more">»</button>
        </div>
        <div class="strip stub"><i class="grip"></i></div>
      </div>

      <svg class="canvas" role="img" aria-label="筏板基础平面图">
        <rect width="100%" height="100%" fill="#000"/>
        <rect width="251" height="100%" fill="#bababa"/>
        <rect x="251" width="366" height="100%" fill="#007ffa"/>
        <path d="M0 111.500H616M0 245.500H616" stroke="#e00018"/>
        <path d="M0 119H616M373 0V600" stroke="#ff0" stroke-width="2"/>
        <path d="M250.500 0V600" stroke="#e00030"/><path d="M251.500 0V600" stroke="#f0f"/>
        <path d="M616.500 0V600" stroke="#fff" stroke-dasharray="5 3"/><path d="M617.500 0V600" stroke="#f00000"/>
        <g fill="none" stroke="#0a800a">
          <circle cx="12.500" cy="112" r="12.500"/><circle cx="12.500" cy="245.500" r="12.500"/>
          <circle cx="250.500" cy="13" r="12.500"/><circle cx="617.500" cy="13" r="12.500"/>
        </g>
        <g class="axname" text-anchor="middle">
          <text x="12.500" y="117" fill="#666">B</text><text x="12.500" y="251" fill="#555">A</text>
          <text x="251" y="18" fill="#c07050">7</text><text x="617.500" y="18" fill="#b04a4a">8</text>
        </g>
        <path d="M55 216V178" stroke="#0f0" stroke-width="4"/><path d="M51 179L55 168L59 179Z" fill="#0f0"/>
        <path d="M55 217H92" stroke="#f00" stroke-width="4"/><path d="M92 213V221L104 217Z" fill="#f00"/>
        <path d="M64 171L68.500 175.500L73 171M68.500 175.500V180" stroke="#0f0" fill="none"/><path d="M92 196L101 205M101 196L92 205" stroke="#f00"/>
      </svg>

      <div class="row snapbar">
        <div class="strip">
          <i class="grip"></i>
          <button class="tb"><svg class="i"><use href="#ortho"/></svg>正交</button>
          <button class="tb on"><svg class="i"><use href="#snap"/></svg>对象捕捉</button>
          <button class="tb on"><svg class="i"><use href="#dyn"/></svg>动态输入</button>
        </div>
        <div class="strip">
          <i class="grip"></i>
          <button class="tb"><svg class="i"><use href="#cross"/></svg>交点</button>
          <button class="tb on"><svg class="i"><use href="#perp"/></svg>垂点</button>
          <button class="tb on"><svg class="i"><use href="#mid"/></svg>中点</button>
          <button class="tb"><svg class="i"><use href="#vertex"/></svg>顶点</button>
          <button class="tb"><svg class="i"><use href="#coord"/></svg>坐标</button>
        </div>
        <div class="strip coords">
          <i class="grip"></i>
          <span class="combo short"><select aria-label="偏移方式"><option>不偏移</option></select></span><i class="sep"></i>
          <label for="ox">X=</label><span class="num"><input id="ox" value="0" disabled><svg width="8" height="16"><path d="M4 1L7 4H1ZM4 15L7 12H1Z" fill="#555"/></svg></span><span class="unit">mm</span>
          <label for="oy">Y=</label><span class="num"><input id="oy" value="0" disabled><svg width="8" height="16"><path d="M4 1L7 4H1ZM4 15L7 12H1Z" fill="#555"/></svg></span><span class="unit">mm</span><i class="sep"></i>
          <input type="checkbox" id="rot"><label class="rot" for="rot">旋转</label><span class="num wide"><input aria-label="旋转角度" value="0.000" disabled><svg width="8" height="16"><path d="M4 1L7 4H1ZM4 15L7 12H1Z" fill="#555"/></svg></span><span class="unit">°</span>
        </div>
      </div>

      <section class="bottom">
        <div class="dock"><button aria-label="关闭"><svg width="11" height="11"><rect width="11" height="11" fill="#3a3436"/><path d="M2 2L9 9M9 2L2 9" stroke="#fff" stroke-width="2"/><path d="M0 .5H10" stroke="#c88"/></svg></button></div>
        <div class="gridwrap">
          <div class="strip gridbar">
            <button class="tb" disabled aria-label="首条"><svg class="i"><use href="#first"/></svg></button>
            <button class="tb" disabled aria-label="上一条"><svg class="i"><use href="#prev"/></svg></button>
            <button class="tb" aria-label="下一条"><svg class="i"><use href="#next"/></svg></button>
            <button class="tb" aria-label="末条"><svg class="i"><use href="#last"/></svg></button><i class="sep"></i>
            <button class="tb" disabled aria-label="上移"><svg class="i"><use href="#up"/></svg></button>
            <button class="tb" aria-label="下移"><svg class="i"><use href="#down"/></svg></button><i class="sep"></i>
            <button class="tb" disabled><svg class="i"><use href="#insert"/></svg>插入</button>
            <button class="tb" disabled><svg class="i"><use href="#remove"/></svg>删除</button>
            <button class="tb"><svg class="i"><use href="#scale"/></svg>缩尺配筋</button>
            <button class="tb"><svg class="i"><use href="#info"/></svg>钢筋信息</button>
            <button class="tb"><svg class="i"><use href="#gallery"/></svg>钢筋图库</button>
            <button class="tb"><svg class="i"><use href="#other"/></svg><span>其他<i class="dn"></i></span></button>
            <button class="tb">关闭</button><i class="sep"></i>
            <span class="total">单构件钢筋总重(kg) : 27.357</span>
          </div>
          <div class="frame">
            <table>
              <colgroup><col class="w33"><col class="w73"><col class="w36"><col class="w33"><col class="w201"><col class="w166"><col class="w156"><col class="w61"><col><col class="w39"><col class="w49"><col class="w61"><col class="w54"></colgroup>
              <thead><tr><th></th><th class="cur">筋号</th><th>级别</th><th>图号</th><th>图形</th><th>计算公式</th><th>公式描述</th><th>长度<kbd>(mm)</kbd></th><th>根数</th><th>搭接</th><th>损耗<kbd>(%)</kbd></th><th>单重<kbd>(kg)</kbd></th><th>总重<kbd>(kg)</kbd></th></tr></thead>
              <tbody>
              <tr><th class="cur">1*</th><td class="cell">侧面纵筋<kbd>.1</kbd></td><td class="gr"><svg width="12" height="12"><use href="#grade"/></svg></td><td>64</td>
                <td class="fig"><svg width="200" height="33"><path d="M40 7V21H159V7" fill="none" stroke="#000" stroke-width="2"/><text x="19" y="18">150</text><text x="88" y="18" class="len">3859</text><text x="162" y="19">150</text></svg></td>
                <td>3939+15*d-40+15*d-40</td><td class="desc">净长+弯折-保护层+弯折-保护层</td><td>4159</td><td>2</td><td>0</td><td>0</td><td>2.566</td><td>5.132</td></tr>
              <tr><th>2</th><td class="name">侧面纵筋<kbd>.2</kbd></td><td class="gr"><svg width="12" height="12"><use href="#grade"/></svg></td><td>18</td>
                <td class="fig"><svg width="200" height="33"><path d="M33 8V21H171" fill="none" stroke="#000" stroke-width="2"/><text x="10" y="20">150</text><text x="85" y="15" class="len">3520</text></svg></td>
                <td>3300+max(52*d, 300)/2+15*d-40</td><td class="desc">净长+半个绑扎长度+弯折-保护层</td><td>3670</td><td>2</td><td>0</td><td>0</td><td>2.264</td><td>4.529</td></tr>
              <tr><th>3</th><td class="name">侧面纵筋<kbd>.3</kbd></td><td class="gr"><svg width="12" height="12"><use href="#grade"/></svg></td><td>64</td>
                <td class="fig"><svg width="200" height="33"><path d="M40 7V21H159V7" fill="none" stroke="#000" stroke-width="2"/><text x="19" y="18">150</text><text x="85" y="18" class="len">13520</text><text x="162" y="19">150</text></svg></td>
                <td>13600+15*d-40+15*d-40</td><td class="desc">净长+弯折-保护层+弯折-保护层</td><td>13820</td><td>2</td><td>520</td><td>0</td><td>8.848</td><td>17.696</td></tr>
              <tr class="blank"><th>4</th><td class="name"></td><td></td><td></td><td></td><td></td><td></td><td></td><td></td><td></td><td></td><td></td><td></td></tr>
              </tbody>
            </table>
            <div class="hbar"><svg class="c"><path d="M7 1L3 5L7 9" fill="none" stroke="#444" stroke-width="1.800"/></svg><div class="track"><div class="thumb"></div></div><svg class="c"><path d="M3 1L7 5L3 9" fill="none" stroke="#444" stroke-width="1.800"/></svg></div>
          </div>
        </div>
      </section>
    </main>
  </div>

  <footer class="status">
    <div class="s1"><kbd>X=227147 Y=7585</kbd></div><div class="s2">层高<kbd>:3.47m</kbd></div><div class="s3">底标高<kbd>:-3.5m</kbd></div><div class="s4"><kbd>1(1)</kbd></div><div class="s5">按鼠标左键指定第一个角点，或拾取构件图元</div>
    <div class="ime">
      <svg class="logo"><use href="#sogou"/></svg><b>英</b>
      <svg class="i" viewBox="0 0 16 16"><circle cx="5" cy="6" r="1.800" fill="#1c78d0"/><path d="M12 7V9Q12 11 10 12" fill="none" stroke="#1c78d0" stroke-width="2"/></svg>
      <svg class="i" viewBox="0 0 16 16"><rect x="5" y="0" width="6" height="10" rx="3" fill="#1c78d0"/><path d="M2.500 6Q2.500 12 8 12Q13.500 12 13.500 6M8 12V15M5 15H11" fill="none" stroke="#1c78d0" stroke-width="1.500"/></svg>
      <svg class="i" viewBox="0 0 16 16"><rect y="2" width="16" height="12" rx="1" fill="#1c78d0"/><path d="M2 5H14M2 8H14" stroke="#fff" stroke-width="1.800" stroke-dasharray="2 1"/><path d="M4 11.500H12" stroke="#fff" stroke-width="1.500"/></svg>
      <svg class="i" viewBox="0 0 16 16"><circle cx="6" cy="4" r="3.500" fill="#b4bdd2"/><path d="M0 14Q0 8 6 8Q10 8 11 11V14Z" fill="#b4bdd2"/><path d="M8 9V14M10 10H14L12 15" stroke="#8e99b4" stroke-width="1.500" fill="none"/></svg>
      <svg class="i" viewBox="0 0 16 16"><path d="M5 1Q8 3 11 1L16 4L14 8L12 7V15H4V7L2 8L0 4Z" fill="#1c78d0"/></svg>
      <svg class="i" viewBox="0 0 16 16"><path d="M2 14L9 7" stroke="#1c78d0" stroke-width="3" stroke-linecap="round"/><path d="M12.500 1Q8 1 8 5Q8 9 12 8Q15 7 15 4L12 6L10 4Z" fill="#1c78d0"/></svg>
    </div>
  </footer>
</div>

<div class="taskbar">
  <button class="start" aria-label="开始"><svg class="i"><use href="#win"/></svg></button>
  <div class="search"><svg width="22" height="22"><circle cx="11" cy="11" r="9" fill="none" stroke="#fff" stroke-width="3"/></svg><input aria-label="搜索" placeholder="在这里输入你要搜索的内容"><svg width="12" height="18"><rect x="3.500" y="1.500" width="5" height="11" rx="1" fill="none" stroke="#aaa"/><path d="M.5 8V14.500H11.500V8M6 14V17M3 17.500H9" fill="none" stroke="#aaa"/></svg></div>
  <div class="pins">
    <button aria-label="风扇"><svg class="k" viewBox="0 0 24 24"><path d="M11 11Q3 13 2 8Q2 3 6 2Q11 1 11 5ZM13 10Q11 2 16 2Q21 2 22 6Q23 10 19 10ZM13 13Q21 11 22 16Q22 21 18 22Q13 23 13 19ZM11 14Q13 22 8 22Q3 22 2 18Q1 14 5 14Z" fill="#e8e8e8"/></svg></button>
    <button aria-label="旋风"><svg class="k" viewBox="0 0 24 24"><path d="M21 4Q14 1 8 4Q2 8 4 15Q7 21 13 20Q19 18 18 12Q15 7 11 10Q9 14 13 15M21 4Q17 5 15 5Q8 5 7 11Q7 17 12 18M18 12Q21 9 20 7L14 7" fill="none" stroke="#ccc" stroke-width="1.100"/></svg></button>
  </div>
  <div class="apps">
    <button aria-label="Edge"><svg class="k" viewBox="0 0 24 24"><path d="M2 11Q4 1 13 1.500Q22 2 22 13H9Q10 18 15 18Q18 18 21 16V21Q17 23 13 23Q4 22 4 14Q5 9 10 7Q5 7 2 11ZM9 10H16Q16 6 12.500 6Q9.500 6 9 10Z" fill="#0a78d7"/></svg></button>
    <button aria-label="应用商店"><svg class="k" viewBox="0 0 24 24"><path d="M2 7L22 6V23L2 21Z" fill="#fff"/><path d="M7 7V4Q8 1 12 2Q15 3 15 6M10 6Q12 0 17 3V6" fill="none" stroke="#fff" stroke-width="1.500"/><path d="M6 10L11 9.500V14H6ZM12 9.500L18 9V14H12ZM6 15H11V19L6 18.500ZM12 15H18V20L12 19.200Z" fill="#021014"/></svg></button>
    <button aria-label="文件资源管理器"><svg class="k" viewBox="0 0 24 24"><path d="M1 3H9L11 5H23V21H1Z" fill="#f8d978"/><path d="M5 21V13H19V21H15V17H9V21Z" fill="#3f9fdc"/></svg></button>
    <button class="act run" aria-label="GGJ2013"><svg class="k" viewBox="0 0 16 16"><use href="#app"/></svg></button>
    <button class="run" aria-label="广联达G+"><svg class="k" viewBox="0 0 24 24"><path d="M23 2Q19 4 15 2Q7 -1 2 7Q-1 15 5 20Q12 25 18 20Q23 15 20 9L11 8Q14 9 16 11Q17 16 12 16Q8 15 8 11Q9 6 15 6Q21 6 23 2Z" fill="#1c9cf0"/></svg></button>
    <button class="run" aria-label="360浏览器"><svg class="k" viewBox="0 0 24 24"><circle cx="12" cy="12" r="10" fill="#5cc830" stroke="#dff5d0" stroke-width="1.500"/><path d="M7 11.500H17Q17 7 12 7Q7 7 7 12Q7 17 12 17Q15 17 17 15" fill="none" stroke="#fff" stroke-width="2.500"/><path d="M4 22Q2 19 8 12Q15 2 22 3" fill="none" stroke="#3a9a1a" stroke-width="1.500"/></svg></button>
    <button class="run" aria-label="记事"><svg class="k" viewBox="0 0 24 24"><rect x=".5" y=".5" width="23" height="23" rx="2" fill="#f49a20" stroke="#c05a10"/><path d="M3 7L14 4L18 18L6 21Z" fill="#fff6dc" stroke="#a86a2a"/><path d="M6 9L13 8M7 12L14 11M8 15L15 14" stroke="#b08a5a"/><path d="M11 14L19 1L22 3L14 16Z" fill="#8a3a20"/></svg></button>
  </div>
  <div class="tray">
    <svg class="i" viewBox="0 0 16 16"><path d="M2 11L8 5L14 11" fill="none" stroke="#fff" stroke-width="1.300"/></svg>
    <svg class="i" viewBox="0 0 16 16"><path d="M5.500 5.500H14.500V12.500H5.500ZM15.500 7V11" fill="none" stroke="#fff"/><rect x="7" y="7" width="6" height="4" fill="#fff"/><path d="M1 3H5V6Q3 8 1 6ZM3 7V12H5M2 1V3M4 1V3" fill="none" stroke="#fff"/></svg>
    <svg class="i" viewBox="0 0 16 16"><path d="M3 15Q3 4 14 4M6 15Q6 7 14 7M9 15Q9 10 14 10" fill="none" stroke="#bbb" stroke-width="1.200"/><circle cx="12.500" cy="13.500" r="1.500" fill="#fff"/></svg>
    <svg class="i" viewBox="0 0 16 16"><path d="M1 6H3.500L7 3V13L3.500 10H1Z" fill="none" stroke="#fff"/><path d="M9 6Q10.500 8 9 10M11 4Q14 8 11 12M13 2.500Q17 8 13 13.500" fill="none" stroke="#ccc"/></svg>
    <span class="lang">中</span>
    <svg class="i"><use href="#sogou"/></svg>
  </div>
  <div class="clock"><time>17:21</time><time>2017/8/29</time></div>
  <button class="note" aria-label="2 条通知"><svg width="26" height="26"><path d="M2 2H18V14H9L6 17V14H2Z" fill="#fff"/><path d="M5 5.500H15M5 8.500H15M5 11.500H12" stroke="#000"/><circle cx="17.500" cy="17.500" r="7.500" fill="#2b2b2b" stroke="#777"/><text x="17.500" y="22" text-anchor="middle">2</text></svg></button>
</div>
</div>
</body>
</html>
```

FILE: styles.css
```css
* { box-sizing: border-box; }
body {
  margin: 0;
  font: 12px/16px "Open Sans", "Noto Sans CJK SC", sans-serif;
  color: #000;
  background: #f0f0f0;
}
button, select, input { font: inherit; color: inherit; }
button { background: none; border: 0; padding: 0; white-space: nowrap; }
ul { list-style: none; margin: 0; padding: 0; }
kbd { font: 10px/16px "DejaVu Sans Mono", monospace; }
.sprite { position: absolute; width: 0; height: 0; }
.i { width: 16px; height: 16px; flex: none; display: block; }
.c { width: 10px; height: 10px; flex: none; display: block; }

.desktop { height: 100vh; display: flex; flex-direction: column; overflow: hidden; }
.app { flex: 1; min-height: 0; display: flex; flex-direction: column; }

/* title bar */
.title { position: relative; height: 23px; display: flex; align-items: center; background: #fff; padding-left: 2px; flex: none; }
.title h1 { font-size: 12px; font-weight: 400; margin: 0 0 0 5px; flex: 1; white-space: nowrap; }
.winbtns { display: flex; gap: 34px; padding-right: 19px; }
.winbtns svg { display: block; }
.badge {
  position: absolute; left: 399px; top: -30px; width: 48px; height: 48px; border-radius: 50%;
  background: #3cb85c; box-shadow: 0 1px 3px #777; border: 2px solid #5aa870;
  color: #fff; font: bold 12px/16px "DejaVu Sans", sans-serif; text-align: center; padding-top: 27px;
}

/* strips and buttons */
.strip { display: flex; align-items: center; background: linear-gradient(#fcfcfc, #f1f1f1); height: 100%; }
.row { display: flex; flex: none; }
.tb { display: flex; align-items: center; gap: 4px; height: 22px; border: 1px solid transparent; padding: 0 3px 0 2px; flex: none; }
.tb:disabled { color: #8b8b8b; }
.tb.on { background: #dcebf8; border-color: #0a78d0; }
.tb.on.hot, .hotdd { background: #abd2f2; }
.hotdd { height: 22px; border: 1px solid #0a78d0; border-left: 0; flex: none; }
.dd { width: 12px; flex: none; display: flex; justify-content: center; }
.hotdd .dd { width: 10px; }
.dd::before, .dn::before, .combo::after { content: ""; border: 3px solid transparent; border-top-color: #111; border-bottom: 0; }
.dn { display: inline-flex; width: 8px; justify-content: flex-end; vertical-align: middle; }
.tb:disabled .dn::before { border-top-color: #888; }
.sep { width: 1px; height: 16px; background: #b4b4b4; margin: 0 2px 0 3px; flex: none; }
.grip { width: 2px; height: 14px; margin: 0 3px; flex: none; background: repeating-linear-gradient(#b0b0b0 0 2px, transparent 2px 4px); }
.more { align-self: flex-start; margin-left: auto; font-size: 14px; line-height: 16px; font-weight: 600; flex: none; }
.combo { display: flex; align-items: center; width: 69px; height: 22px; background: linear-gradient(90deg, #fff 0 calc(100% - 12px), #f3f3f3 0); margin-right: 3px; padding-right: 3px; flex: none; }
.combo.short { width: 57px; }
.combo select { appearance: none; border: 0; background: none; padding: 0 0 0 2px; flex: 1; min-width: 0; outline: 0; }

.menu { height: 30px; display: flex; align-items: center; flex: none; }
.menus { display: flex; gap: 11px; padding: 0 14px 0 7px; }
.tip { flex: 0 1 187px; justify-content: center; margin: 0 2px; }
.tip a { color: #2f6a00; text-decoration: none; white-space: nowrap; }
.account { flex: 1; padding-right: 4px; }
.beans { margin: 0 5px 0 3px; white-space: nowrap; }

.main-tools { height: 31px; padding-bottom: 2px; gap: 3px; }
.files { flex: 0 0 149px; padding-left: 1px; }
.define { flex: 0 0 549px; padding: 0 2px; }
.view { flex: 1; padding: 0 4px 0 1px; }

.body { flex: 1; min-height: 0; display: flex; gap: 5px; }

/* navigation */
.side { flex: 0 0 184px; min-width: 0; display: flex; flex-direction: column; padding-bottom: 2px; font-family: "Noto Sans CJK SC", sans-serif; }
.side-head { background: #0054e3; color: #fff; height: 15px; display: flex; align-items: center; gap: 9px; padding-right: 5px; margin-bottom: 2px; flex: none; }
.side-head span { flex: 1; line-height: 15px; font-size: 13px; }
.side-head svg { display: block; }
.tab { height: 22px; flex: none; border: 1px solid #a0a0a0; border-top-color: #fff; border-right-width: 2px; background: #f0f0f0; text-align: center; }
.treebar { height: 27px; display: flex; gap: 7px; padding: 0 7px; align-items: center; flex: none; }
.tree { flex: 1; min-height: 0; overflow: hidden; display: flex; background: #fff; border: 2px solid #82878f; border-width: 1px 1px 1px 2px; padding: 1px; margin: 0 1px 1px 1px; }
.roots { flex: 1; min-width: 0; overflow: hidden; }
.g { display: flex; align-items: center; height: 16px; gap: 4px; padding-left: 5px; white-space: nowrap; }
.g .c { margin-right: 3px; }
.kids { margin-left: 11px; border-left: 1px dotted #777; }
.roots > li:last-child .kids { border: 0; }
.kids li { display: flex; padding-left: 18px; height: 16px; white-space: nowrap; }
.kids li i { width: 9px; height: 16px; border-left: 1px dotted #777; background: repeating-linear-gradient(90deg, #888 0 1px, transparent 1px 2px) 0 8px / 100% 1px no-repeat; flex: none; }
.kids li:last-child i { height: 9px; }
.kids button { display: flex; align-items: center; height: 16px; padding: 0 4px 0 3px; }
.kids button .i:first-child { margin-right: 4px; }
.kids .sel { background: #d9d9d9; }
.tree em { font: bold 10px/12px "DejaVu Sans Mono", monospace; background: #ffe11a; margin: -6px 0 0 1px; }
.vbar { width: 16px; flex: none; background: #f0f0f0; display: flex; flex-direction: column; justify-content: space-between; align-items: center; padding: 5px 0; }
.vbar .thumb { width: 100%; height: 56%; background: #cdcdcd; margin-top: auto; margin-bottom: 10px; }

/* work area */
.work { flex: 1; min-width: 0; display: flex; flex-direction: column; margin-right: 1px; }
.r2 { height: 27px; padding-left: 1px; }
.r3 { height: 28px; padding: 1px 0 1px 1px; }
.r4 { height: 29px; padding: 1px 0 1px 1px; gap: 2px; }
.axis { margin-left: 75px; padding-right: 2px; }
.draw { flex: 1; min-width: 0; padding-right: 2px; }
.stub { flex: 0 0 33px; }
.canvas { flex: 1; min-height: 0; width: 100%; display: block; background: #000; }
.axname { font: bold 14px "Liberation Sans", sans-serif; }
.snapbar { height: 30px; padding: 2px 0 2px 1px; gap: 3px; }
.coords label { color: #777; margin-right: 3px; }
.coords .unit { color: #777; margin: 0 4px 0 2px; }
.coords .rot { color: #000; margin: 0 4px 0 8px; }
.coords input[type="checkbox"] { appearance: none; width: 12px; height: 12px; margin: 0; border: 1px solid #999; background: #f6f6f6; }
.num { display: flex; align-items: center; width: 58px; height: 23px; border: 1px solid #7a7a7a; padding-right: 3px; background: #f0f0f0; }
.num.wide { width: 68px; }
.num input { flex: 1; min-width: 0; border: 0; background: none; text-align: right; color: #888; padding: 0 8px 0 0; }

/* rebar grid */
.bottom { flex: none; display: flex; height: 241px; }
.dock { flex: 0 0 13px; padding: 4px 0 0 1px; background: radial-gradient(circle, #bbb 1px, transparent 1px) 1px 18px / 5px 5px; background-clip: content-box; }
.dock button, .dock svg { display: block; }
.gridwrap { flex: 1; min-width: 0; display: flex; flex-direction: column; }
.gridbar { height: 30px; flex: none; padding-top: 3px; }
.total { margin-left: 3px; white-space: nowrap; }
.frame { flex: 1; min-height: 0; display: flex; flex-direction: column; justify-content: space-between; border: 1px solid #a0a0a0; background: #fff; font-family: "Noto Sans CJK SC", sans-serif; }
table { table-layout: fixed; width: 100%; border-collapse: collapse; }
th, td { border: 1px solid #b8b8b8; padding: 0 4px 0 1px; height: 34px; font-weight: 400; text-align: left; overflow: hidden; }
th:first-child, td:first-child { border-left: 0; }
th:last-child, td:last-child { border-right: 0; }
thead th { height: 20px; border-top: 0; padding: 0; text-align: center; background: linear-gradient(#fff, #ececec); white-space: nowrap; }
thead th.cur { background: linear-gradient(#f9dba0, #f2bd5c); color: #5a0050; }
tbody th { text-align: center; background: linear-gradient(#fdfdfd, #ececec); padding: 0 8px 0 0; font: 10px "DejaVu Sans Mono", monospace; }
tbody th.cur { background: #ffd48a; color: #5a0050; }
td { background: #ccffd9; font: 10px/12px "DejaVu Sans Mono", "Noto Sans CJK SC", monospace; word-break: break-all; }
td.name, td.cell { font: 12px/16px "Noto Sans CJK SC", sans-serif; border-right-color: #000; white-space: nowrap; }
td.cell { background: #ace9da; }
td.desc { font: 12px/12px "Noto Sans CJK SC", sans-serif; padding: 0 1px; }
td.gr { text-align: center; padding: 0; }
td.gr svg { vertical-align: middle; }
td.fig { padding: 0; }
td.fig svg { display: block; }
td.fig text { font: 11px "Liberation Sans", sans-serif; }
td.fig .len { fill: #f00; }
.blank th, .blank td { height: 19px; background: #fff; }
.blank th { background: #f6f6f6; }
.w33 { width: 33px; } .w36 { width: 36px; } .w39 { width: 39px; } .w49 { width: 49px; } .w54 { width: 54px; }
.w61 { width: 61px; } .w73 { width: 73px; } .w156 { width: 156px; } .w166 { width: 166px; } .w201 { width: 201px; }
.hbar { display: flex; align-items: center; height: 17px; background: #f0f0f0; padding: 0 3px; }
.hbar .track { flex: 1; height: 15px; margin: 0 6px; }
.hbar .thumb { width: 55%; height: 100%; margin-left: 11%; background: #cdcdcd; }

/* status line */
.status { position: relative; flex: none; height: 22px; padding-top: 2px; display: flex; gap: 3px; border-top: 1px solid #fff; font-family: "Noto Sans CJK SC", sans-serif; }
.status > div { white-space: nowrap; }
.s1, .s2, .s3, .s4, .s5 { border: 1px solid #d0d0d0; border-left-color: #fff; background: linear-gradient(#fbfbfb, #f2f2f2); padding-left: 1px; line-height: 17px; }
.s1 { flex: 0 0 148px; } .s2 { flex: 0 0 77px; } .s3 { flex: 0 0 98px; } .s4 { flex: 0 0 47px; } .s5 { flex: 1; }
.ime { position: absolute; right: 1px; bottom: 0; width: 177px; height: 24px; background: #fdfdff; border: 1px solid #b4c8dc; display: flex; align-items: center; gap: 6px; padding: 0 3px 0 0; justify-content: flex-end; }
.ime .logo { position: absolute; left: -8px; top: -4px; width: 28px; height: 28px; }
.ime b { color: #1c78d0; font-size: 14px; margin-right: 1px; }

/* task bar */
.taskbar { flex: none; height: 40px; display: flex; background: #020c10; color: #fff; }
.start { width: 48px; background: #000; display: flex; align-items: center; justify-content: center; }
.search { flex: 0 1 344px; display: flex; align-items: center; background: #333; padding: 0 15px 0 9px; }
.search input { flex: 1; min-width: 0; border: 0; background: none; font-size: 14px; padding: 0 0 0 5px; }
.search input::placeholder { color: #9a9a9a; opacity: 1; }
.pins, .apps { display: flex; gap: 1px; }
.pins { padding: 0 6px 0 2px; }
.pins button, .apps button { width: 48px; display: flex; align-items: center; justify-content: center; border-bottom: 2px solid transparent; }
.k { width: 24px; height: 24px; }
.apps .run { border-bottom: 0; background: linear-gradient(#76b9ed, #76b9ed) center bottom / 40px 2px no-repeat; }
.apps .act { background: linear-gradient(#76b9ed, #76b9ed) center bottom / 48px 2px no-repeat #333c40; }
.tray { margin-left: auto; display: flex; align-items: center; gap: 8px; }
.lang { font-size: 14px; }
.clock { width: 84px; margin-left: 4px; display: flex; flex-direction: column; justify-content: center; align-items: center; line-height: 19px; }
.note { width: 43px; display: flex; align-items: center; justify-content: center; border-right: 1px solid #666; margin-right: 4px; }
.note text { font: bold 11px "Open Sans", sans-serif; fill: #fff; }
```
